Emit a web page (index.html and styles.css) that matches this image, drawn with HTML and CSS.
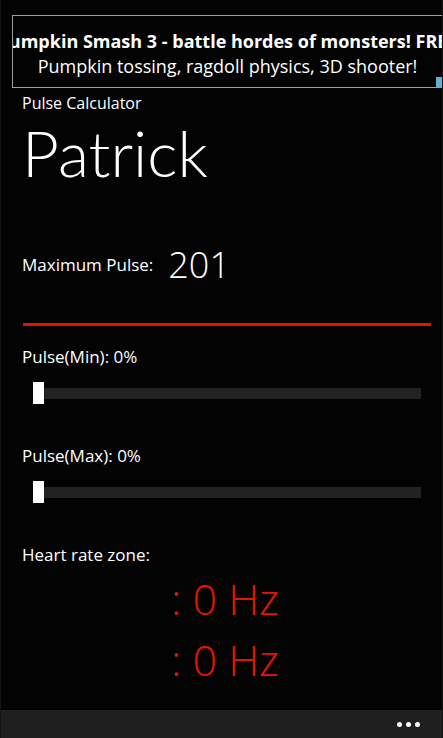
FILE: index.html
```html
<!DOCTYPE html>
<html lang="en">
<head>
  <meta charset="UTF-8" />
  <meta name="viewport" content="width=device-width, initial-scale=1.0" />
  <title>Pulse Calculator</title>
  <link rel="stylesheet" href="styles.css">
</head>
<body>
  <div class="tela">
    <div class="anuncio">
      <div class="anuncio-linha anuncio-titulo">Pumpkin Smash 3 - battle hordes of monsters! FREE</div>
      <div class="anuncio-linha">Pumpkin tossing, ragdoll physics, 3D shooter!</div>
      <span class="anuncio-selo"></span>
    </div>

    <div class="conteudo">
      <div class="app-nome">Pulse Calculator</div>
      <div class="pagina-titulo">Patrick</div>

      <div class="maximo">
        <span class="rotulo">Maximum Pulse:</span>
        <span class="maximo-valor">201</span>
      </div>
      <div class="linha-vermelha"></div>

      <div class="rotulo">Pulse(Min): 0%</div>
      <div class="slider"><span class="slider-polegar"></span><span class="slider-trilho"></span></div>

      <div class="rotulo">Pulse(Max): 0%</div>
      <div class="slider"><span class="slider-polegar"></span><span class="slider-trilho"></span></div>

      <div class="rotulo zona">Heart rate zone:</div>
      <div class="hz">: 0 Hz</div>
      <div class="hz">: 0 Hz</div>
    </div>

    <div class="barra-app">
      <span class="ponto"></span><span class="ponto"></span><span class="ponto"></span>
    </div>
  </div>
</body>
</html>
```

FILE: styles.css
```css
body {
  margin: 0;
  background: #000;
  color: #fff;
  font-family: 'Open Sans', 'Noto Sans', sans-serif;
}
.tela {
  width: 443px;
  height: 738px;
  box-sizing: border-box;
  border-left: 1px solid #141414;
  border-right: 1px solid #141414;
  display: flex;
  flex-direction: column;
  overflow: hidden;
  background: #030303;
}
.anuncio {
  position: relative;
  margin: 15px 0 0 11px;
  height: 73px;
  box-sizing: border-box;
  padding-top: 5px;
  border: 1px solid #a0a0a0;
  border-right: none;
  display: flex;
  flex-direction: column;
  align-items: center;
  justify-content: center;
  overflow: hidden;
}
.anuncio-linha {
  white-space: nowrap;
  font-size: 18px;
  line-height: 25px;
}
.anuncio-titulo {
  font-weight: bold;
  font-size: 18px;
}
.anuncio-selo {
  position: absolute;
  right: 0;
  bottom: 0;
  width: 6px;
  height: 10px;
  background: #5fb0d6;
}
.conteudo {
  flex: 1;
  padding: 0 11px 0 21px;
}
.app-nome {
  font-size: 16px;
  line-height: 24px;
  margin-top: 3px;
}
.pagina-titulo {
  font-family: Lato, 'Open Sans', sans-serif;
  font-size: 64px;
  font-weight: 300;
  line-height: 76px;
}
.rotulo {
  font-size: 17px;
  line-height: 24px;
}
.maximo {
  display: flex;
  align-items: center;
  gap: 15px;
  margin-top: 52px;
}
.maximo-valor {
  font-size: 36px;
  font-weight: 300;
  line-height: 44px;
}
.linha-vermelha {
  height: 3px;
  background: #e51400;
  margin: 36px 0 19px 1px;
}
.slider {
  display: flex;
  align-items: center;
  height: 22px;
  margin: 13px 10px 40px 11px;
}
.slider-polegar {
  width: 11px;
  height: 22px;
  background: #fff;
}
.slider-trilho {
  flex: 1;
  height: 11px;
  background: #222;
}
.zona {
  margin-top: 16px;
}
.hz {
  color: #e51400;
  font-size: 43px;
  font-weight: 300;
  line-height: 61px;
  padding-left: 149px;
}
.zona + .hz {
  margin-top: 1px;
}
.barra-app {
  height: 28px;
  background: #1f1f1f;
  display: flex;
  justify-content: flex-end;
  align-items: center;
  gap: 4px;
  padding-right: 22px;
}
.ponto {
  width: 5px;
  height: 5px;
  border-radius: 50%;
  background: #fff;
}
```
